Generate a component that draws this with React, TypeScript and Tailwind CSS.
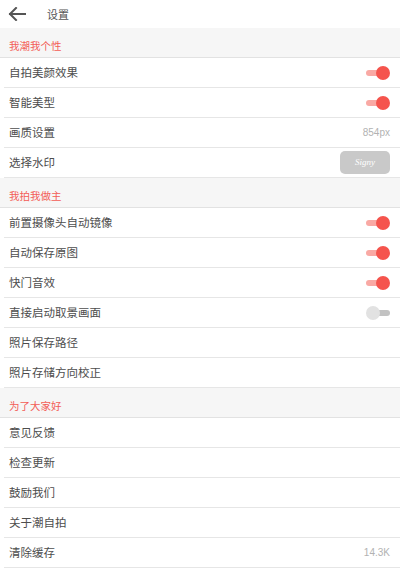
import React from 'react';

type Row = { label: string; toggle?: boolean; on?: boolean; value?: string; watermark?: boolean };

const sections: { title: string; rows: Row[] }[] = [
  {
    title: '我潮我个性',
    rows: [
      { label: '自拍美颜效果', toggle: true, on: true },
      { label: '智能美型', toggle: true, on: true },
      { label: '画质设置', value: '854px' },
      { label: '选择水印', watermark: true },
    ],
  },
  {
    title: '我拍我做主',
    rows: [
      { label: '前置摄像头自动镜像', toggle: true, on: true },
      { label: '自动保存原图', toggle: true, on: true },
      { label: '快门音效', toggle: true, on: true },
      { label: '直接启动取景画面', toggle: true, on: false },
      { label: '照片保存路径' },
      { label: '照片存储方向校正' },
    ],
  },
  {
    title: '为了大家好',
    rows: [
      { label: '意见反馈' },
      { label: '检查更新' },
      { label: '鼓励我们' },
      { label: '关于潮自拍' },
      { label: '清除缓存', value: '14.3K' },
    ],
  },
];

function Toggle({ on }: { on?: boolean }) {
  if (on) {
    return (
      <div className="relative h-[14px] w-[24px]">
        <div className="absolute left-0 top-[4px] h-[6px] w-[20px] rounded-full bg-[#f9a9a4]" />
        <div className="absolute right-0 top-0 h-[14px] w-[14px] rounded-full bg-[#f5544d]" />
      </div>
    );
  }
  return (
    <div className="relative h-[14px] w-[24px]">
      <div className="absolute right-0 top-[4px] h-[6px] w-[20px] rounded-full bg-[#c2c2c2]" />
      <div className="absolute left-0 top-0 h-[14px] w-[14px] rounded-full bg-[#e2e2e2]" />
    </div>
  );
}

export default function App() {
  return (
    <div
      className="h-[568px] w-[400px] overflow-hidden bg-white text-[#444]"
      style={{ fontFamily: '"Noto Sans CJK SC", "Liberation Sans", sans-serif' }}
    >
      {/* 顶栏 */}
      <header className="flex h-[28px] items-center bg-white">
        <svg className="ml-[8px]" width="18" height="14" viewBox="0 0 18 14" fill="none">
          <path d="M17 7H2M8 1L2 7l6 6" stroke="#555" strokeWidth="2" strokeLinecap="square" />
        </svg>
        <span className="ml-[21px] text-[11px] text-[#555]">设置</span>
      </header>

      {sections.map((s) => (
        <div key={s.title}>
          <div className="flex h-[30px] items-end border-b border-[#e2e2e2] bg-[#f6f6f6] pb-[3px] pl-[9px] text-[10.5px] text-[#f35d57]">
            {s.title}
          </div>
          {s.rows.map((r) => (
            <div
              key={r.label}
              className="ml-[4px] flex h-[30px] items-center justify-between border-b border-[#e6e6e6] pl-[5px] pr-[10px]"
            >
              <span className="text-[11.5px] text-[#4d4d4d]">{r.label}</span>
              {r.toggle && <Toggle on={r.on} />}
              {r.value && (
                <span
                  className="text-[10px] text-[#b2b2b2]"
                  style={{ fontFamily: '"Liberation Sans", sans-serif' }}
                >
                  {r.value}
                </span>
              )}
              {r.watermark && (
                <div className="flex h-[23px] w-[50px] items-center justify-center rounded-[5px] bg-[#c9c9c9]">
                  <span
                    className="italic text-[9px] text-white"
                    style={{ fontFamily: '"Liberation Serif", serif' }}
                  >
                    Signy
                  </span>
                </div>
              )}
            </div>
          ))}
        </div>
      ))}
    </div>
  );
}
